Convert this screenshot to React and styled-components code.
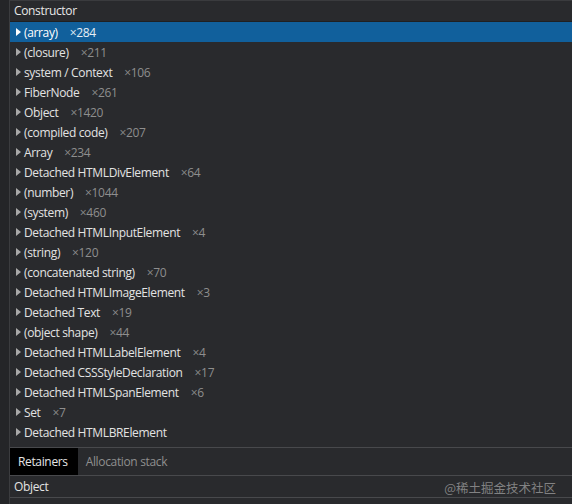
import React from 'react';
import styled, { createGlobalStyle } from 'styled-components';

const GlobalStyle = createGlobalStyle`
  html, body {
    margin: 0;
    padding: 0;
    background: #292a2d;
  }
  body {
    font-family: "Segoe UI", "Open Sans", "Noto Sans", sans-serif;
    font-size: 12px;
    letter-spacing: -0.35px;
    color: #e3e3e3;
  }
`;

const Frame = styled.div`
  display: flex;
  width: 572px;
  height: 504px;
  overflow: hidden;
  position: relative;
`;

const SideStrip = styled.div`
  width: 9px;
  background: #242528;
  border-right: 1px solid #3b3c3f;
`;

const Panel = styled.div`
  flex: 1;
  display: flex;
  flex-direction: column;
  border-top: 1px solid #3a3b3e;
  background: #292a2d;
`;

const HeaderCell = styled.div`
  height: 20px;
  line-height: 20px;
  padding-left: 4px;
  color: #e8e8e8;
  border-bottom: 1px solid #1f2022;
`;

const List = styled.div`
  display: flex;
  flex-direction: column;
  height: 425px;
`;

const Row = styled.div`
  display: flex;
  align-items: center;
  height: 20px;
  padding-left: 6px;
  background: ${p => (p.$selected ? '#11609c' : 'transparent')};
  color: ${p => (p.$selected ? '#ffffff' : '#e3e3e3')};
  white-space: nowrap;
`;

const Arrow = styled.span`
  width: 0;
  height: 0;
  border-top: 4px solid transparent;
  border-bottom: 4px solid transparent;
  border-left: 5px solid ${p => (p.$selected ? '#ffffff' : '#a9a9a9')};
  margin-right: 3px;
`;

const Count = styled.span`
  margin-left: 12px;
  color: ${p => (p.$selected ? '#e6eef6' : '#8e8e8e')};
`;

const TabBar = styled.div`
  display: flex;
  height: 27px;
  border-top: 1px solid #48494c;
  border-bottom: 1px solid #48494c;
`;

const Tab = styled.div`
  display: flex;
  align-items: center;
  padding: 0 10px 0 8px;
  background: ${p => (p.$active ? '#000000' : 'transparent')};
  color: ${p => (p.$active ? '#e6e6e6' : '#8f8f8f')};
`;

const DetailRow = styled.div`
  height: 21px;
  line-height: 22px;
  padding-left: 4px;
  color: #e3e3e3;
  border-bottom: 1px solid #48494c;
`;

const Watermark = styled.div`
  position: absolute;
  right: 16px;
  bottom: 7px;
  font-family: "Noto Sans CJK SC", sans-serif;
  font-size: 12.5px;
  letter-spacing: 0;
  color: rgba(160, 160, 160, 0.75);
`;

const entries = [
  ['(array)', '×284'],
  ['(closure)', '×211'],
  ['system / Context', '×106'],
  ['FiberNode', '×261'],
  ['Object', '×1420'],
  ['(compiled code)', '×207'],
  ['Array', '×234'],
  ['Detached HTMLDivElement', '×64'],
  ['(number)', '×1044'],
  ['(system)', '×460'],
  ['Detached HTMLInputElement', '×4'],
  ['(string)', '×120'],
  ['(concatenated string)', '×70'],
  ['Detached HTMLImageElement', '×3'],
  ['Detached Text', '×19'],
  ['(object shape)', '×44'],
  ['Detached HTMLLabelElement', '×4'],
  ['Detached CSSStyleDeclaration', '×17'],
  ['Detached HTMLSpanElement', '×6'],
  ['Set', '×7'],
  ['Detached HTMLBRElement', ''],
];

export default function App() {
  return (
    <>
      <GlobalStyle />
      <Frame>
        <SideStrip />
        <Panel>
          <HeaderCell>Constructor</HeaderCell>
          <List>
            {entries.map(([name, count], i) => (
              <Row key={name} $selected={i === 0}>
                <Arrow $selected={i === 0} />
                <span>{name}</span>
                {count && <Count $selected={i === 0}>{count}</Count>}
              </Row>
            ))}
          </List>
          <TabBar>
            <Tab $active>Retainers</Tab>
            <Tab>Allocation stack</Tab>
          </TabBar>
          <DetailRow>Object</DetailRow>
        </Panel>
        <Watermark>@稀土掘金技术社区</Watermark>
      </Frame>
    </>
  );
}
